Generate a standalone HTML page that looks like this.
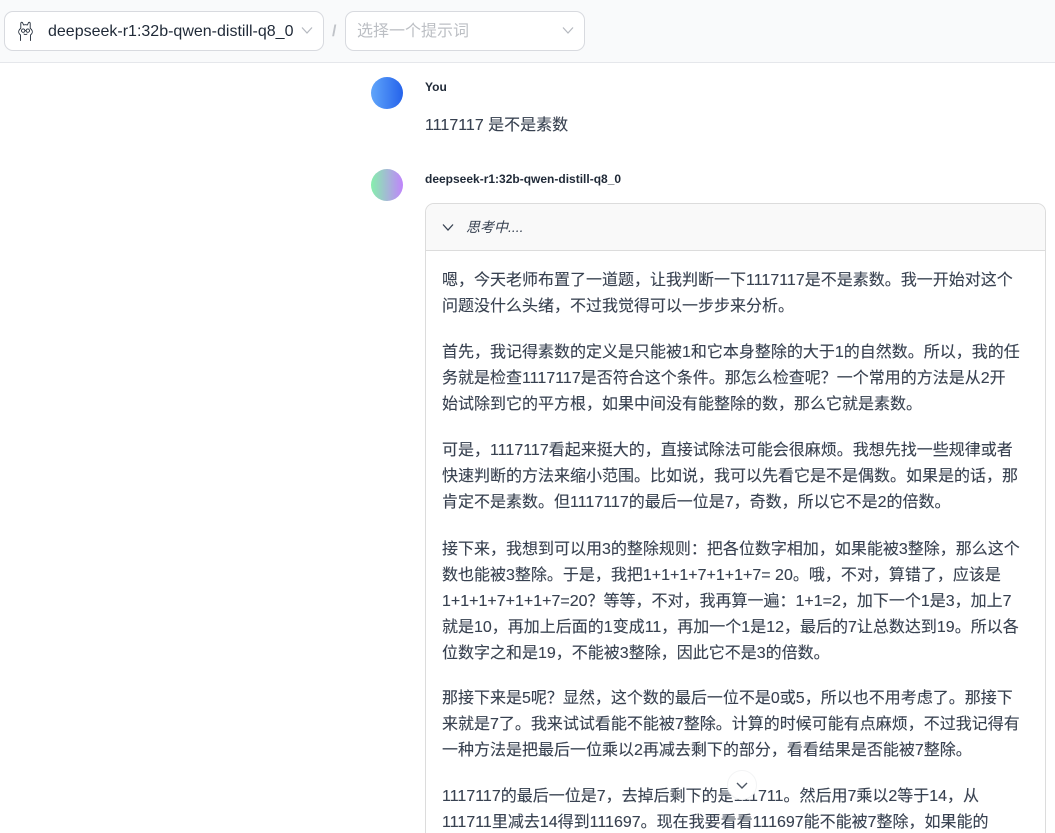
<!DOCTYPE html>
<html lang="zh-CN">
<head>
<meta charset="utf-8">
<title>Chat</title>
<style>
html,body{margin:0;padding:0;width:1055px;height:833px;overflow:hidden;background:#fff}
body{position:relative;font-family:"Liberation Sans","Noto Sans CJK SC",sans-serif;color:#374151}
.abs{position:absolute}
.hdr{left:0;top:0;width:1055px;height:62px;background:#f9fafb;border-bottom:1px solid #e5e7eb}
.sel{top:11px;height:38px;background:#fff;border:1px solid #d8dadf;border-radius:9px;box-sizing:content-box}
.l{position:absolute;left:442px;font-size:16px;line-height:26px;height:26px;white-space:nowrap;color:#374151;-webkit-text-stroke:0.12px #3a3f48}
</style>
</head>
<body>
<div class="abs hdr"></div>
<div class="abs sel" style="left:4px;width:318px"></div>
<svg class="abs" style="left:16px;top:20px" width="20" height="22" viewBox="0 0 20 22" fill="none" stroke="#1f2937" stroke-width="0.9" stroke-linecap="round" stroke-linejoin="round">
<path d="M4.5 20.5V15C2.6 13.5 2.2 11.5 3.2 10C3.6 9.2 4.2 8.8 4.8 8.4V3.4C4.8 2.2 5.9 1.8 6.6 2.8L7.6 5C8.8 4.6 10.2 4.6 11.4 5L12.4 2.8C13.1 1.8 14.2 2.2 14.2 3.4V8.4C14.8 8.8 15.4 9.2 15.8 10C16.8 11.5 16.4 13.5 14.5 15V20.5"/>
<circle cx="7.2" cy="10.6" r="1.7"/><circle cx="11.8" cy="10.6" r="1.7"/>
<path d="M8.9 10.6H10.1M8 14C8.6 14.8 10.4 14.8 11 14"/>
</svg>
<div class="abs" style="left:48px;top:21px;font-size:16px;line-height:21px;color:#1f2937;white-space:nowrap">deepseek-r1:32b-qwen-distill-q8_0</div>
<svg class="abs" style="left:300px;top:25px" width="14" height="11" viewBox="0 0 14 11" fill="none" stroke="#b4b8bf" stroke-width="1.2"><path d="M2 2.5L7 8L12 2.5"/></svg>
<div class="abs" style="left:332px;top:21px;font-size:16px;line-height:21px;color:#c0c3c8;font-weight:700">/</div>
<div class="abs sel" style="left:345px;width:238px"></div>
<div class="abs" style="left:357px;top:21px;font-size:16px;line-height:21px;color:#bcbfc4;white-space:nowrap">选择一个提示词</div>
<svg class="abs" style="left:561px;top:25px" width="14" height="11" viewBox="0 0 14 11" fill="none" stroke="#b4b8bf" stroke-width="1.2"><path d="M2 2.5L7 8L12 2.5"/></svg>

<div class="abs" style="left:371px;top:77px;width:32px;height:32px;border-radius:50%;background:linear-gradient(90deg,#60a5fa,#2563eb)"></div>
<div class="abs" style="left:425px;top:80px;font-size:12px;line-height:14px;font-weight:700;color:#1f2937">You</div>
<div class="l" style="left:425px;top:113px">1117117 是不是素数</div>

<div class="abs" style="left:371px;top:169px;width:32px;height:32px;border-radius:50%;background:linear-gradient(90deg,#86efac,#c084fc)"></div>
<div class="abs" style="left:425px;top:172px;font-size:12px;line-height:14px;font-weight:700;color:#1f2937;white-space:nowrap">deepseek-r1:32b-qwen-distill-q8_0</div>

<div class="abs" style="left:425px;top:203px;width:621px;height:660px;box-sizing:border-box;border:1px solid #dcdcdc;border-radius:9px;background:#fff;overflow:hidden">
  <div style="height:46px;background:#f9f9f9;border-bottom:1px solid #dcdcdc"></div>
</div>
<svg class="abs" style="left:441px;top:222px" width="14" height="11" viewBox="0 0 14 11" fill="none" stroke="#374151" stroke-width="1.3"><path d="M2 2.5L7 8L12 2.5"/></svg>
<div class="abs" style="left:466px;top:218px;font-size:14px;line-height:18px;font-style:italic;color:#374151">思考中....</div>

<div class="l" style="top:268px">嗯，今天老师布置了一道题，让我判断一下1117117是不是素数。我一开始对这个</div>
<div class="l" style="top:294px">问题没什么头绪，不过我觉得可以一步步来分析。</div>

<div class="l" style="top:340px">首先，我记得素数的定义是只能被1和它本身整除的大于1的自然数。所以，我的任</div>
<div class="l" style="top:366px">务就是检查1117117是否符合这个条件。那怎么检查呢？一个常用的方法是从2开</div>
<div class="l" style="top:392px">始试除到它的平方根，如果中间没有能整除的数，那么它就是素数。</div>

<div class="l" style="top:438px">可是，1117117看起来挺大的，直接试除法可能会很麻烦。我想先找一些规律或者</div>
<div class="l" style="top:464px">快速判断的方法来缩小范围。比如说，我可以先看它是不是偶数。如果是的话，那</div>
<div class="l" style="top:490px">肯定不是素数。但1117117的最后一位是7，奇数，所以它不是2的倍数。</div>

<div class="l" style="top:537px">接下来，我想到可以用3的整除规则：把各位数字相加，如果能被3整除，那么这个</div>
<div class="l" style="top:563px">数也能被3整除。于是，我把1+1+1+7+1+1+7= 20。哦，不对，算错了，应该是</div>
<div class="l" style="top:589px">1+1+1+7+1+1+7=20？等等，不对，我再算一遍：1+1=2，加下一个1是3，加上7</div>
<div class="l" style="top:615px">就是10，再加上后面的1变成11，再加一个1是12，最后的7让总数达到19。所以各</div>
<div class="l" style="top:641px">位数字之和是19，不能被3整除，因此它不是3的倍数。</div>

<div class="l" style="top:686px">那接下来是5呢？显然，这个数的最后一位不是0或5，所以也不用考虑了。那接下</div>
<div class="l" style="top:712px">来就是7了。我来试试看能不能被7整除。计算的时候可能有点麻烦，不过我记得有</div>
<div class="l" style="top:738px">一种方法是把最后一位乘以2再减去剩下的部分，看看结果是否能被7整除。</div>

<div class="l" style="top:784px">1117117的最后一位是7，去掉后剩下的是111711。然后用7乘以2等于14，从</div>
<div class="l" style="top:810px">111711里减去14得到111697。现在我要看看111697能不能被7整除，如果能的</div>

<div class="abs" style="left:727px;top:770px;width:30px;height:30px;box-sizing:border-box;border-radius:50%;background:#fff;border:1px solid #f3f4f5"></div>
<svg class="abs" style="left:735px;top:780px" width="14" height="11" viewBox="0 0 14 11" fill="none" stroke="#4b5563" stroke-width="1.4"><path d="M2 3L7 8L12 3"/></svg>
</body>
</html>
